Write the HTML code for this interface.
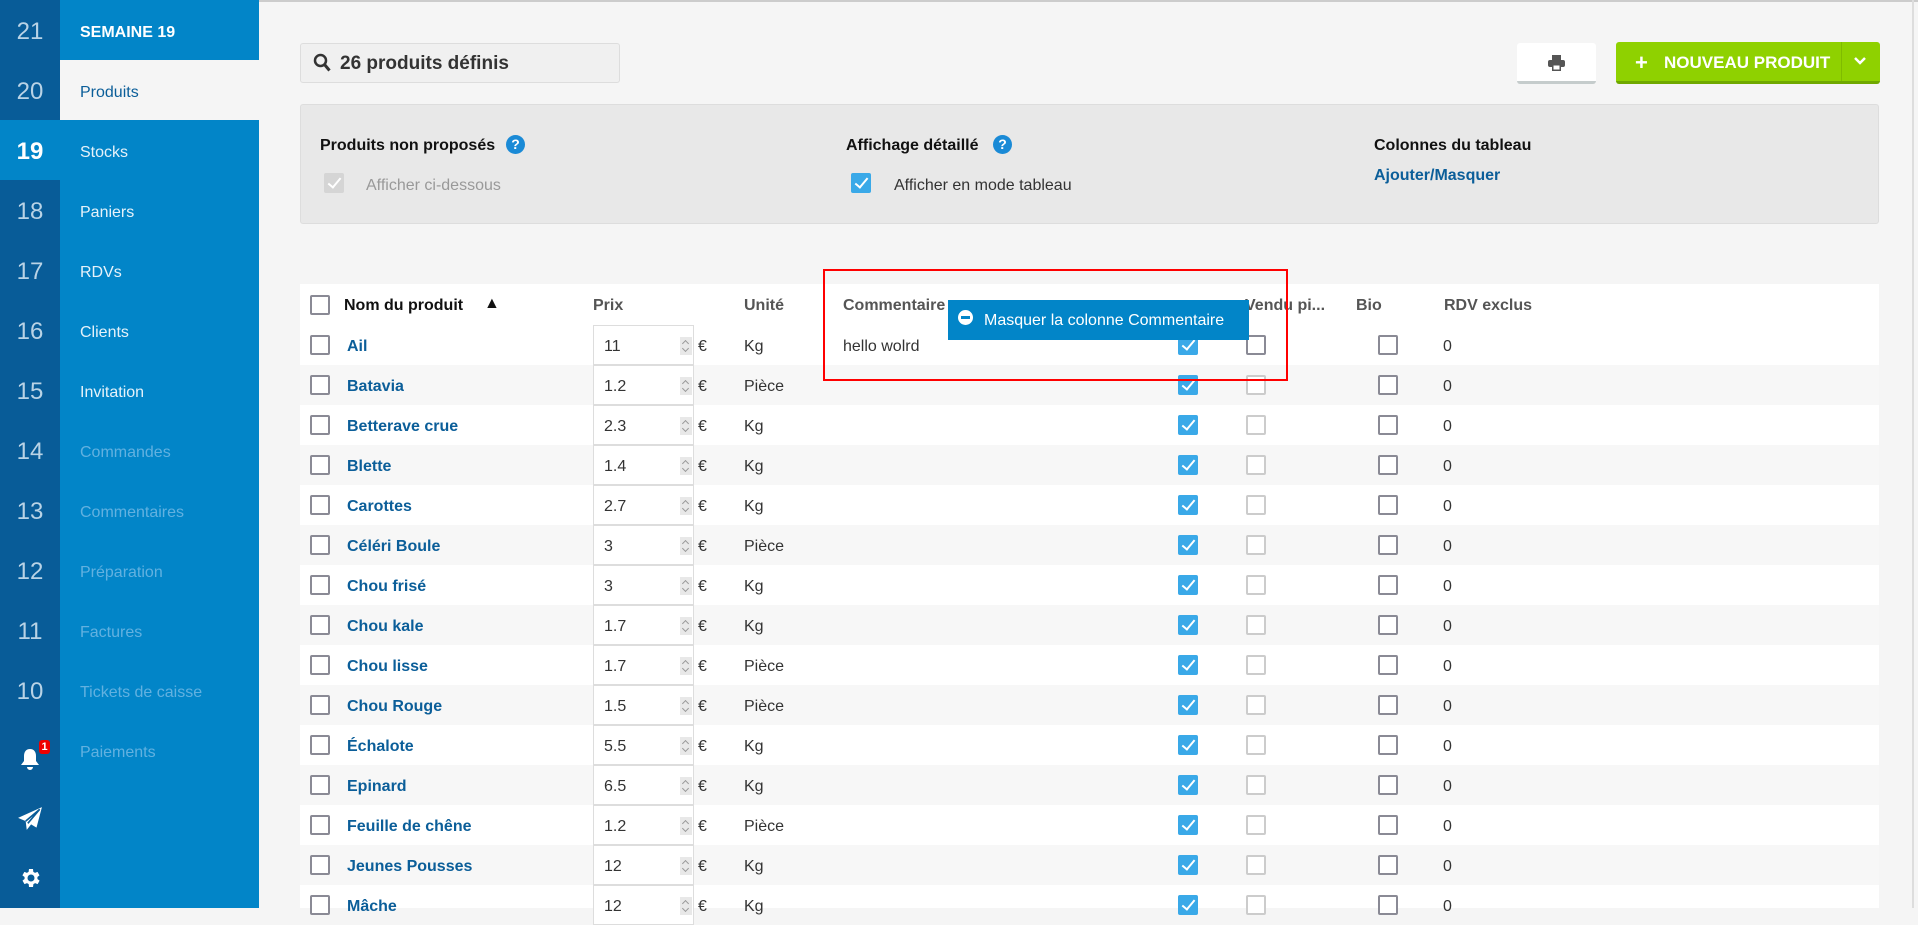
<!DOCTYPE html>
<html><head><meta charset="utf-8"><style>
*{box-sizing:border-box;margin:0;padding:0}
body{width:1918px;height:908px;overflow:hidden;background:#f5f5f5;font-family:"Liberation Sans",sans-serif;position:relative;color:#333}
.a{position:absolute}
.num{position:absolute;left:0;width:60px;height:60px;background:#085c98;color:#b9d3e6;font-size:24px;line-height:64px;text-align:center}
.men{position:absolute;left:60px;width:199px;height:60px;background:#0285c8;color:#e6f2fa;font-size:16px;line-height:66px;padding-left:20px}
.dis{color:#62b1e0}
.cb{position:absolute;width:20px;height:20px;border:2px solid #8a8a95;border-radius:2px;background:#fff}
.cbl{border-color:#ccc}
.ck{position:absolute;width:20px;height:20px;background:#3aa9e8;border-radius:2px}
.ck:after{content:"";position:absolute;left:7px;top:2px;width:5px;height:11px;border:solid #fff;border-width:0 2.5px 2.5px 0;transform:rotate(40deg)}
.row{position:absolute;left:300px;width:1579px;height:40px}
.row.s{background:#f7f7f7}
.nm{position:absolute;left:47px;top:13px;font-size:16px;font-weight:bold;color:#0b5e99}
.in{position:absolute;left:293px;top:0;width:101px;height:40px;background:#fff;border:1px solid #ddd;font-size:16px;padding:12px 0 0 10px;color:#333}
.sp{position:absolute;left:380px;top:12px;width:12px;height:18px;background:#e8e8e8}
.sp:before,.sp:after{content:"";position:absolute;left:3px;width:4px;height:4px;border:solid #999;border-width:1px 0 0 1px}
.sp:before{top:4px;transform:rotate(45deg)}
.sp:after{top:9px;transform:rotate(225deg)}
.eu{position:absolute;left:398px;top:13px;font-size:16px}
.un{position:absolute;left:444px;top:13px;font-size:16px}
.z{position:absolute;left:1143px;top:13px;font-size:16px}
.row .cb{top:10px;left:20px}
.row .ck{top:10px;left:878px}
.row .v{top:10px;left:946px}
.row .b{top:10px;left:1078px}
.h{position:absolute;top:297px;font-size:16px;font-weight:bold;color:#555}
</style></head><body>
<div class="a" style="left:0;top:0;width:1918px;height:2px;background:#ccc"></div>
<div class="a" style="left:1912px;top:0;width:2px;height:908px;background:#ddd"></div>
<div class="num" style="top:0">21</div><div class="men" style="top:0;font-weight:bold;color:#fff">SEMAINE 19</div>
<div class="num" style="top:60px">20</div><div class="men" style="top:60px;background:#f5f5f5;color:#0b5e99">Produits</div>
<div class="num" style="top:120px;background:#0285c8;color:#fff;font-weight:bold">19</div><div class="men" style="top:120px">Stocks</div>
<div class="num" style="top:180px">18</div><div class="men" style="top:180px">Paniers</div>
<div class="num" style="top:240px">17</div><div class="men" style="top:240px">RDVs</div>
<div class="num" style="top:300px">16</div><div class="men" style="top:300px">Clients</div>
<div class="num" style="top:360px">15</div><div class="men" style="top:360px">Invitation</div>
<div class="num" style="top:420px">14</div><div class="men dis" style="top:420px">Commandes</div>
<div class="num" style="top:480px">13</div><div class="men dis" style="top:480px">Commentaires</div>
<div class="num" style="top:540px">12</div><div class="men dis" style="top:540px">Préparation</div>
<div class="num" style="top:600px">11</div><div class="men dis" style="top:600px">Factures</div>
<div class="num" style="top:660px">10</div><div class="men dis" style="top:660px">Tickets de caisse</div>
<div class="num" style="top:720px"></div><div class="men dis" style="top:720px">Paiements</div>
<div class="a" style="left:0;top:780px;width:60px;height:128px;background:#085c98"></div>
<div class="a" style="left:60px;top:780px;width:199px;height:128px;background:#0285c8"></div>
<svg class="a" style="left:18px;top:746px" width="24" height="28" viewBox="0 0 24 28"><path d="M12 3c-4 0-6 3-6 7v5l-3 4h18l-3-4v-5c0-4-2-7-6-7z M9 21a3 3 0 0 0 6 0z" fill="#fff"/></svg>
<div class="a" style="left:39px;top:740px;width:11px;height:14px;background:#e00;border-radius:3px;color:#fff;font-size:11px;font-weight:bold;text-align:center;line-height:14px">1</div>
<svg class="a" style="left:17px;top:806px" width="26" height="26" viewBox="0 0 24 24"><path d="M23 1L1 11l7 3 1 8 4-5 5 3z" fill="#fff"/><path d="M8 14L21 3 10 16" stroke="#085c98" stroke-width="1.5" fill="none"/></svg>
<svg class="a" style="left:18px;top:866px" width="24" height="24" viewBox="0 0 24 24"><path fill="#fff" d="M19.4 13a7.5 7.5 0 0 0 0-2l2.1-1.6-2-3.5-2.5 1a7 7 0 0 0-1.7-1L15 3h-4l-.4 2.9a7 7 0 0 0-1.7 1l-2.5-1-2 3.5L6.6 11a7.5 7.5 0 0 0 0 2l-2.1 1.6 2 3.5 2.5-1a7 7 0 0 0 1.7 1L11 21h4l.4-2.9a7 7 0 0 0 1.7-1l2.5 1 2-3.5zM13 15.5a3.5 3.5 0 1 1 0-7 3.5 3.5 0 0 1 0 7z"/></svg>
<div class="a" style="left:300px;top:43px;width:320px;height:40px;background:#f0f0f0;border:1px solid #ddd;border-radius:3px"></div>
<svg class="a" style="left:313px;top:53px" width="18" height="20" viewBox="0 0 18 20"><circle cx="7.5" cy="7.5" r="5.5" stroke="#333" stroke-width="2.5" fill="none"/><path d="M11.5 11.5l5 6" stroke="#333" stroke-width="3"/></svg>
<div class="a" style="left:340px;top:53px;font-size:19px;font-weight:bold;color:#333">26 produits définis</div>
<div class="a" style="left:1517px;top:43px;width:79px;height:41px;background:#fff;border-bottom:3px solid #c5cccc;border-radius:3px"></div>
<svg class="a" style="left:1548px;top:55px" width="17" height="16" viewBox="0 0 17 16"><rect x="4" y="0" width="9" height="5" fill="#555"/><rect x="0" y="5" width="17" height="7" rx="2" fill="#555"/><rect x="4" y="9" width="9" height="7" fill="#555"/><rect x="5.5" y="10.5" width="6" height="4" fill="#fff"/></svg>
<div class="a" style="left:1616px;top:42px;width:264px;height:42px;background:#8fd100;border-bottom:3px solid #6fa800;border-radius:3px"></div>
<div class="a" style="left:1841px;top:42px;width:1px;height:39px;background:#7fbb00"></div>
<div class="a" style="left:1635px;top:50px;font-size:22px;font-weight:bold;color:#fff">+</div>
<div class="a" style="left:1664px;top:53px;font-size:17px;font-weight:bold;color:#fff">NOUVEAU PRODUIT</div>
<svg class="a" style="left:1853px;top:56px" width="14" height="10" viewBox="0 0 14 10"><path d="M2 2l5 5 5-5" stroke="#fff" stroke-width="2.5" fill="none"/></svg>
<div class="a" style="left:300px;top:104px;width:1579px;height:120px;background:#e8e8e8;border:1px solid #ddd;border-radius:3px"></div>
<div class="a" style="left:320px;top:137px;font-size:16px;font-weight:bold;color:#111">Produits non proposés</div>
<div class="a" style="left:506px;top:135px;width:19px;height:19px;border-radius:50%;background:#1a8ad6;color:#fff;font-size:14px;font-weight:bold;text-align:center;line-height:19px">?</div>
<div class="ck" style="left:324px;top:173px;background:#d5d5d5"></div>
<div class="a" style="left:366px;top:177px;font-size:16px;color:#999">Afficher ci-dessous</div>
<div class="a" style="left:846px;top:137px;font-size:16px;font-weight:bold;color:#111">Affichage détaillé</div>
<div class="a" style="left:993px;top:135px;width:19px;height:19px;border-radius:50%;background:#1a8ad6;color:#fff;font-size:14px;font-weight:bold;text-align:center;line-height:19px">?</div>
<div class="ck" style="left:851px;top:173px"></div>
<div class="a" style="left:894px;top:177px;font-size:16px;color:#333">Afficher en mode tableau</div>
<div class="a" style="left:1374px;top:137px;font-size:16px;font-weight:bold;color:#111">Colonnes du tableau</div>
<div class="a" style="left:1374px;top:167px;font-size:16px;font-weight:bold;color:#0b5e99">Ajouter/Masquer</div>
<div class="a" style="left:300px;top:284px;width:1579px;height:624px;background:#fff"></div>
<div class="cb" style="left:310px;top:295px"></div>
<div class="h" style="left:344px;color:#111">Nom du produit</div>
<div class="a" style="left:484px;top:295px;font-size:16px;color:#111">▲</div>
<div class="h" style="left:593px">Prix</div>
<div class="h" style="left:744px">Unité</div>
<div class="h" style="left:843px">Commentaire</div>
<div class="h" style="left:1245px">Vendu pi...</div>
<div class="h" style="left:1356px">Bio</div>
<div class="h" style="left:1444px">RDV exclus</div>

<div class="row" style="top:325px"><div class="cb" style="left:10px"></div><div class="nm">Ail</div><div class="in">11</div><div class="sp"></div><div class="eu">€</div><div class="un">Kg</div><div class="a" style="left:543px;top:13px;font-size:16px">hello wolrd</div><div class="ck"></div><div class="cb v"></div><div class="cb b"></div><div class="z">0</div></div>
<div class="row s" style="top:365px"><div class="cb" style="left:10px"></div><div class="nm">Batavia</div><div class="in">1.2</div><div class="sp"></div><div class="eu">€</div><div class="un">Pièce</div><div class="ck"></div><div class="cb cbl v"></div><div class="cb b"></div><div class="z">0</div></div>
<div class="row" style="top:405px"><div class="cb" style="left:10px"></div><div class="nm">Betterave crue</div><div class="in">2.3</div><div class="sp"></div><div class="eu">€</div><div class="un">Kg</div><div class="ck"></div><div class="cb cbl v"></div><div class="cb b"></div><div class="z">0</div></div>
<div class="row s" style="top:445px"><div class="cb" style="left:10px"></div><div class="nm">Blette</div><div class="in">1.4</div><div class="sp"></div><div class="eu">€</div><div class="un">Kg</div><div class="ck"></div><div class="cb cbl v"></div><div class="cb b"></div><div class="z">0</div></div>
<div class="row" style="top:485px"><div class="cb" style="left:10px"></div><div class="nm">Carottes</div><div class="in">2.7</div><div class="sp"></div><div class="eu">€</div><div class="un">Kg</div><div class="ck"></div><div class="cb cbl v"></div><div class="cb b"></div><div class="z">0</div></div>
<div class="row s" style="top:525px"><div class="cb" style="left:10px"></div><div class="nm">Céléri Boule</div><div class="in">3</div><div class="sp"></div><div class="eu">€</div><div class="un">Pièce</div><div class="ck"></div><div class="cb cbl v"></div><div class="cb b"></div><div class="z">0</div></div>
<div class="row" style="top:565px"><div class="cb" style="left:10px"></div><div class="nm">Chou frisé</div><div class="in">3</div><div class="sp"></div><div class="eu">€</div><div class="un">Kg</div><div class="ck"></div><div class="cb cbl v"></div><div class="cb b"></div><div class="z">0</div></div>
<div class="row s" style="top:605px"><div class="cb" style="left:10px"></div><div class="nm">Chou kale</div><div class="in">1.7</div><div class="sp"></div><div class="eu">€</div><div class="un">Kg</div><div class="ck"></div><div class="cb cbl v"></div><div class="cb b"></div><div class="z">0</div></div>
<div class="row" style="top:645px"><div class="cb" style="left:10px"></div><div class="nm">Chou lisse</div><div class="in">1.7</div><div class="sp"></div><div class="eu">€</div><div class="un">Pièce</div><div class="ck"></div><div class="cb cbl v"></div><div class="cb b"></div><div class="z">0</div></div>
<div class="row s" style="top:685px"><div class="cb" style="left:10px"></div><div class="nm">Chou Rouge</div><div class="in">1.5</div><div class="sp"></div><div class="eu">€</div><div class="un">Pièce</div><div class="ck"></div><div class="cb cbl v"></div><div class="cb b"></div><div class="z">0</div></div>
<div class="row" style="top:725px"><div class="cb" style="left:10px"></div><div class="nm">Échalote</div><div class="in">5.5</div><div class="sp"></div><div class="eu">€</div><div class="un">Kg</div><div class="ck"></div><div class="cb cbl v"></div><div class="cb b"></div><div class="z">0</div></div>
<div class="row s" style="top:765px"><div class="cb" style="left:10px"></div><div class="nm">Epinard</div><div class="in">6.5</div><div class="sp"></div><div class="eu">€</div><div class="un">Kg</div><div class="ck"></div><div class="cb cbl v"></div><div class="cb b"></div><div class="z">0</div></div>
<div class="row" style="top:805px"><div class="cb" style="left:10px"></div><div class="nm">Feuille de chêne</div><div class="in">1.2</div><div class="sp"></div><div class="eu">€</div><div class="un">Pièce</div><div class="ck"></div><div class="cb cbl v"></div><div class="cb b"></div><div class="z">0</div></div>
<div class="row s" style="top:845px"><div class="cb" style="left:10px"></div><div class="nm">Jeunes Pousses</div><div class="in">12</div><div class="sp"></div><div class="eu">€</div><div class="un">Kg</div><div class="ck"></div><div class="cb cbl v"></div><div class="cb b"></div><div class="z">0</div></div>
<div class="row" style="top:885px"><div class="cb" style="left:10px"></div><div class="nm">Mâche</div><div class="in">12</div><div class="sp"></div><div class="eu">€</div><div class="un">Kg</div><div class="ck"></div><div class="cb cbl v"></div><div class="cb b"></div><div class="z">0</div></div>

<div class="a" style="left:948px;top:300px;width:301px;height:40px;background:#0285c8;color:#fff;font-size:16px;line-height:42px;padding-left:36px">Masquer la colonne Commentaire</div>
<div class="a" style="left:958px;top:310px;width:15px;height:15px;border-radius:50%;background:#fff"></div>
<div class="a" style="left:961px;top:316px;width:9px;height:3px;background:#0285c8"></div>
<div class="a" style="left:823px;top:269px;width:465px;height:112px;border:2px solid #f00"></div>
</body></html>
